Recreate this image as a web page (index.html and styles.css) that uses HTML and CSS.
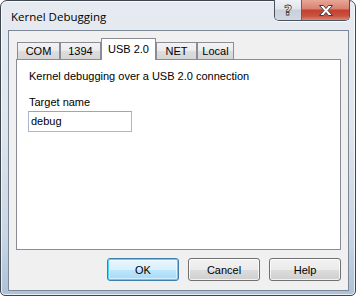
FILE: index.html
```html
<!DOCTYPE html>
<html>
<head>
<meta charset="utf-8">
<link rel="stylesheet" href="styles.css">
</head>
<body>
<div class="window">
  <div class="titlebar">
    <span class="title">Kernel Debugging</span>
    <div class="caption">
      <div class="cap-btn help-btn"><span class="qmark">?</span></div>
      <div class="cap-btn close-btn">
        <svg width="16" height="11" viewBox="0 0 16 11"><path d="M1.5 0.5h4l2.5 3 2.5-3h4l-4.5 5 4.5 5h-4l-2.5-3-2.5 3h-4l4.5-5z" fill="#fff" stroke="#3a3f47" stroke-width="1" stroke-linejoin="round"/></svg>
      </div>
    </div>
  </div>
  <div class="client">
    <div class="tabs">
      <div class="tab tab-com">COM</div>
      <div class="tab tab-1394">1394</div>
      <div class="tab tab-usb active">USB 2.0</div>
      <div class="tab tab-net">NET</div>
      <div class="tab tab-local">Local</div>
    </div>
    <div class="panel">
      <p class="desc">Kernel debugging over a USB 2.0 connection</p>
      <label class="label">Target name</label>
      <div class="textbox">debug</div>
    </div>
    <div class="buttons">
      <div class="btn default">OK</div>
      <div class="btn">Cancel</div>
      <div class="btn">Help</div>
    </div>
  </div>
</div>
</body>
</html>
```
FILE: styles.css
```css
* { box-sizing: border-box; }
html, body { margin: 0; padding: 0; background: #fff; }
body { font-family: "Liberation Sans", Arial, sans-serif; font-size: 11px; color: #000; }

.window {
  width: 356px;
  height: 296px;
  border: 1px solid #3e4650;
  border-radius: 7px 7px 5px 5px;
  padding: 0 6px 4px 7px;
  display: flex;
  flex-direction: column;
  background: linear-gradient(to bottom, #e6ebf1 0%, #dfe6ee 40%, #c9d6e4 80%, #aec1d7 100%);
  box-shadow: inset 0 0 0 1px rgba(255,255,255,0.7);
}

.titlebar {
  height: 29px;
  display: flex;
  align-items: flex-start;
}
.title {
  font-family: "Open Sans", "Noto Sans", sans-serif;
  font-size: 11.5px;
  padding: 8px 0 0 3px;
}
.caption {
  margin-left: auto;
  margin-top: -1px;
  margin-right: -1px;
  display: flex;
  height: 21px;
  border: 1px solid #4a5260;
  border-top: none;
  border-radius: 0 0 5px 5px;
  overflow: hidden;
  box-shadow: 0 1px 0 rgba(255,255,255,0.8);
}
.cap-btn {
  display: flex;
  align-items: center;
  justify-content: center;
  height: 100%;
}
.help-btn {
  width: 27px;
  border-right: 1px solid #5d6572;
  background: linear-gradient(to bottom, #eef1f5 0%, #dfe5ec 45%, #c7d0db 50%, #cfd8e3 100%);
}
.qmark {
  font-family: "DejaVu Sans", sans-serif;
  font-weight: bold;
  font-size: 14px;
  color: #fff;
  -webkit-text-stroke: 0.8px #3a3f47;
  line-height: 1;
  margin-top: -1px;
}
.close-btn {
  width: 47px;
  background: linear-gradient(to bottom, #e8a797 0%, #d8806f 45%, #c2402f 50%, #c9523e 80%, #d98a72 100%);
}

.client {
  flex: 1;
  border: 1px solid #7d8896;
  background: #f0f0f0;
  padding: 7px 7px 9px 7px;
  display: flex;
  flex-direction: column;
}

.tabs {
  display: flex;
  align-items: flex-end;
  height: 21px;
  padding-left: 1px;
  position: relative;
  z-index: 1;
}
.tab {
  height: 17px;
  padding-top: 2px;
  text-align: center;
  border: 1px solid #898c95;
  border-bottom: none;
  background: linear-gradient(to bottom, #f3f3f3 0%, #ebebeb 50%, #dddddd 51%, #d6d6d6 100%);
  line-height: 13px;
}
.tab-com { width: 43px; }
.tab-1394 { width: 41px; }
.tab-usb { width: 55px; }
.tab-net { width: 41px; }
.tab-local { width: 37px; }
.tab.active {
  height: 22px;
  margin-bottom: -1px;
  padding-top: 4px;
  background: #fff;
  position: relative;
  z-index: 2;
}

.panel {
  height: 191px;
  border: 1px solid #898c95;
  background: #fff;
  padding: 10px 12px;
}
.desc { margin: 0; line-height: 13px; }
.label { display: block; margin-top: 13px; line-height: 13px; }
.textbox {
  margin: 2px 0 0 -1px;
  width: 104px;
  height: 21px;
  border: 1px solid #abb8cb;
  border-top-color: #98a6bb;
  padding: 3px 2px;
  line-height: 13px;
  background: #fff;
}

.buttons {
  margin-top: 8px;
  display: flex;
  justify-content: flex-end;
  gap: 9px;
}
.btn {
  width: 72px;
  height: 23px;
  border: 1px solid #707070;
  border-radius: 3px;
  display: flex;
  align-items: center;
  justify-content: center;
  background: linear-gradient(to bottom, #f2f2f2 0%, #ebebeb 50%, #dddddd 51%, #cfcfcf 100%);
  box-shadow: inset 0 0 0 1px rgba(255,255,255,0.75);
}
.btn.default {
  border-color: #3c7fb1;
  background: linear-gradient(to bottom, #eaf6fd 0%, #d9f0fc 50%, #bee6fd 51%, #a7d9f5 100%);
  box-shadow: inset 0 0 0 1px #48d8fb, inset 0 0 0 2px rgba(255,255,255,0.5);
}
```
